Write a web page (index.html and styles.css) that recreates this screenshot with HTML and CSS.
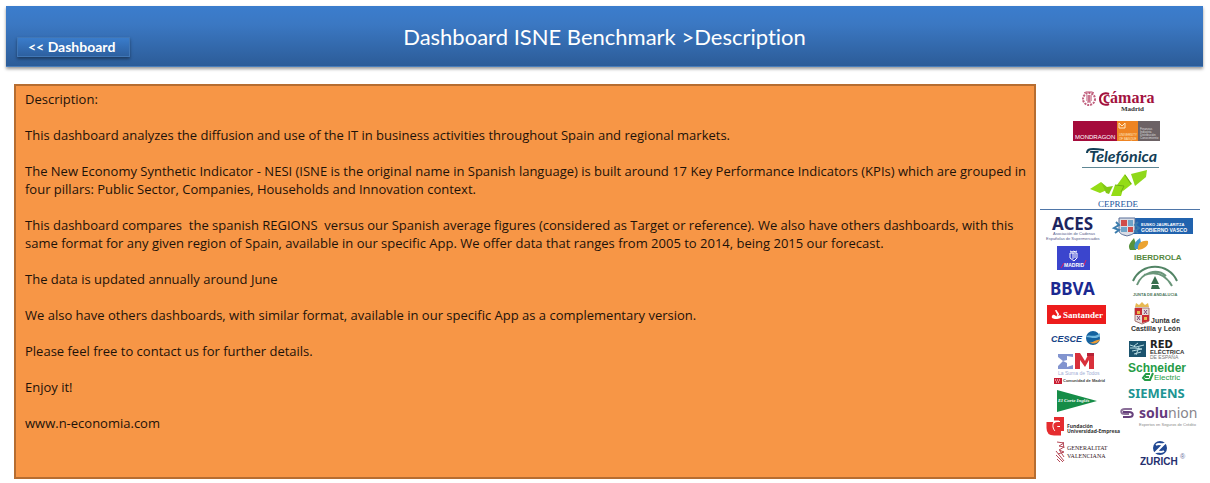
FILE: index.html
```html
<!DOCTYPE html>
<html lang="en">

<head>
    <meta charset="UTF-8">
    <meta name="viewport" content="width=device-width, initial-scale=1.0">
    <title>Dashboard ISNE Benchmark</title>
    <link rel="stylesheet" href="styles.css">
</head>

<body>
    <header class="top-bar">
        <a class="back-link" href="#">&lt;&lt; Dashboard</a>
        <h1 class="title">Dashboard ISNE Benchmark &gt;Description</h1>
    </header>

    <main class="main-container">
        <section class="description">
            <p>Description:</p>
            <p>This dashboard analyzes the diffusion and use of the IT in business activities throughout Spain and regional markets.</p>
            <p>The New Economy Synthetic Indicator - NESI (ISNE is the original name in Spanish language) is built around 17 Key Performance Indicators (KPIs) which are grouped in<br>
                four pillars: Public Sector, Companies, Households and Innovation context.</p>
            <p>This dashboard compares&nbsp; the spanish REGIONS&nbsp; versus our Spanish average figures (considered as Target or reference). We also have others dashboards, with this<br>
                same format for any given region of Spain, available in our specific App. We offer data that ranges from 2005 to 2014, being 2015 our forecast.</p>
            <p>The data is updated annually around June</p>
            <p>We also have others dashboards, with similar format, available in our specific App as a complementary version.</p>
            <p>Please feel free to contact us for further details.</p>
            <p>Enjoy it!</p>
            <p>www.n-economia.com</p>
        </section>

        <aside class="sponsors">
            <div class="partners">
                <!-- Camara Madrid -->
                <svg width="160" height="30" viewBox="0 0 160 30">
                    <circle cx="49" cy="11" r="6" fill="none" stroke="#c0607e" stroke-width="2" stroke-dasharray="2 1"/>
                    <path d="M46 8h6M46 10h6M46 12h6M47 14h4M49 7v7M44 5l2 -1h6l2 1" stroke="#b8486a" fill="none"/>
                    <path d="M69 6c-4-2-9 0-9 5s5 7 9 5" stroke="#a3123f" stroke-width="2" fill="none"/>
                    <text x="63" y="15" class="serif bold" font-size="16" fill="#a3123f">cámara</text>
                    <text x="81" y="23" class="serif bold" font-size="7" fill="#333">Madrid</text>
                </svg>
                <!-- Mondragon -->
                <svg width="160" height="26" viewBox="0 0 160 26">
                    <path d="M33 3h44v20H33z" fill="#a50b3b"/>
                    <path d="M77 3h21v20H77z" fill="#ee8422"/>
                    <path d="M98 3h22v20H98z" fill="#6c6265"/>
                    <text x="35" y="21" font-size="6" fill="#fff">MONDRAGON</text>
                    <path d="M79 5l3 3 3-3M79 5v5h6V5" stroke="#ffe9c5" fill="none"/>
                    <text x="79" y="18" font-size="3" fill="#ffe9c5">UNIVERSITY</text>
                    <text x="79" y="22" font-size="3" fill="#ffe9c5">OF BASQUE</text>
                    <g font-size="3" fill="#ddd">
                        <text x="100" y="12">Finanzas</text>
                        <text x="100" y="15">Industria</text>
                        <text x="100" y="18">Distribución</text>
                        <text x="100" y="21">Conocimiento</text>
                    </g>
                </svg>
                <!-- Telefonica -->
                <svg width="160" height="26" viewBox="0 0 160 26">
                    <path d="M47 9c0-4 3-5 17-3" stroke="#123e56" stroke-width="2" fill="none"/>
                    <text x="49" y="18" class="lato bold italic" font-size="16" fill="#123e56">Telefónica</text>
                    <path d="M42 23.5h77" stroke="#5f8794"/>
                </svg>
                <!-- Ceprede -->
                <svg width="160" height="38" viewBox="0 0 160 38">
                    <path d="M50 19l11-7 6 8-7 3z" fill="#94dc16"/>
                    <path d="M61 12l6 5 6-1-4 8-3-1z" fill="#83c815"/>
                    <path d="M71 26l4-11 9 1-3 10z" fill="#94dc16"/>
                    <path d="M77 15l8-11 7 10-9 7z" fill="#94dc16"/>
                    <path d="M91 4l16-4-1 7-11 9z" fill="#8fd81a"/>
                    <path d="M75 15l9 1-3 6M85 5l6 9" stroke="#6fb012" fill="none"/>
                    <text x="58" y="37" class="serif" font-size="9" fill="#23559c">CEPREDE</text>
                </svg>
            </div>

            <div class="members">
                <div class="column">
                    <!-- ACES -->
                    <svg width="72" height="28" viewBox="0 0 72 28">
                        <text x="12" y="14" class="noto bold" font-size="17" fill="#1d255f">ACES</text>
                        <text x="13" y="19" font-size="4" fill="#555d8c">Asociación de Cadenas</text>
                        <text x="6" y="24" font-size="4" fill="#555d8c">Españolas de Supermercados</text>
                    </svg>
                    <!-- Madrid -->
                    <svg width="72" height="32" viewBox="0 0 72 32">
                        <path d="M17 2h33v24H17z" fill="#3b45cd"/>
                        <path d="M30 9h7v5l-3 3-4-3zM30 7l2 1 2-1 1 1 2-1" stroke="#fff" fill="none"/>
                        <path d="M33 9v6M35 10v4" stroke="#fff"/>
                        <text x="24" y="23" class="bold" font-size="5" fill="#fff">MADRID</text>
                        <path d="M21 24l3-5M44 21l2-5" stroke="#e02062"/>
                    </svg>
                    <!-- BBVA -->
                    <svg width="72" height="26" viewBox="0 0 72 26">
                        <text x="10" y="19" class="noto bold" font-size="17" fill="#1b2991">BBVA</text>
                    </svg>
                    <!-- Santander -->
                    <svg width="72" height="26" viewBox="0 0 72 26">
                        <path d="M7 3h59v19H7z" fill="#ed1c1c"/>
                        <path d="M16 8c-1 2 3 4 1 6 4-1-1-5-1-6z" fill="#fff" stroke="#fff"/>
                        <path d="M12 14c1-2 2-1 4 0s4-2 5 0-2 3-5 3-5-1-4-3z" fill="#fff"/>
                        <text x="23" y="16" class="serif bold" font-size="9" fill="#fff">Santander</text>
                    </svg>
                    <!-- CESCE -->
                    <svg width="72" height="22" viewBox="0 0 72 22">
                        <text x="11" y="14" class="bold italic" font-size="9" fill="#174486">CESCE</text>
                        <circle cx="53" cy="10" r="7" fill="#14629f"/>
                        <path d="M46 9c3-4 8 2 14-4v3c-5 4-9 1-14 1z" fill="#72b8e0"/>
                        <path d="M49 14c4 2 6-3 11-2-2 3-6 5-11 2z" fill="#ee9b32"/>
                    </svg>
                    <!-- Comunidad de Madrid -->
                    <svg width="72" height="38" viewBox="0 0 72 38">
                        <path d="M18 4h15v3l-6-1v4l-4 1 4 2v4l6-2v4H18v-3l5-5-5-4z" fill="#8294cf"/>
                        <path d="M35 3h5l5 8 4-8h5v16h-5v-9l-4 7-5-7v9h-5z" fill="#d9303b"/>
                        <path d="M47 3h7v3h-7z" fill="#b72236"/>
                        <text x="18" y="25" font-size="5" fill="#a3afd6">La Suma de Todos</text>
                        <path d="M14 28h8v6h-8z" fill="#c91e32"/>
                        <path d="M15 30h6M16 32h4" stroke="#fff" stroke-dasharray="1 1"/>
                        <text x="23" y="32" class="bold" font-size="4" fill="#444">Comunidad de Madrid</text>
                    </svg>
                    <!-- El Corte Ingles -->
                    <svg width="72" height="26" viewBox="0 0 72 26">
                        <path d="M17 2l40 11-40 11z" fill="#168d48"/>
                        <text x="18" y="14" class="serif bold italic" font-size="5" fill="#fff">El Corte Inglés</text>
                    </svg>
                    <!-- Fundacion Universidad-Empresa -->
                    <svg width="72" height="24" viewBox="0 0 72 24">
                        <path d="M10 8v6c0 3 1 4 4 4h7" stroke="#e52c2f" stroke-width="7" fill="none"/>
                        <path d="M14 5h8v12M22 10h-4c-4 0-4 5 0 5h4" stroke="#e52c2f" stroke-width="4" fill="none"/>
                        <path d="M12 7h7M14 8c-2 3-1 7 1 9" stroke="#fff" fill="none"/>
                        <text x="27" y="14" class="noto bold" font-size="5" fill="#333">Fundación</text>
                        <text x="27" y="19" class="noto bold" font-size="5" fill="#333">Universidad-Empresa</text>
                    </svg>
                    <!-- Generalitat Valenciana -->
                    <svg width="72" height="28" viewBox="0 0 72 28">
                        <path d="M17 4l7 1-5 3 5 1-5 3 5 2-6 2M16 13l8 10M20 13l4 6M16 17l7 7M17 21l3 3M23 4l1 6" stroke="#b64a58" fill="none"/>
                        <text x="27" y="12" class="serif" font-size="6" fill="#37191f">GENERALITAT</text>
                        <text x="27" y="20" class="serif" font-size="6" fill="#37191f">VALENCIANA</text>
                    </svg>
                </div>

                <div class="column">
                    <!-- Gobierno Vasco -->
                    <svg width="88" height="22" viewBox="0 0 88 22">
                        <path d="M23 2h58v16H18z" fill="#2163ae"/>
                        <path d="M7 2h16v13c-1 4-6 4-8 5-2-1-7-1-8-5z" fill="#d9dde6" stroke="#596f98"/>
                        <path d="M9 4h6v6H9zM16 11h5v5h-5z" fill="#d14c48"/>
                        <path d="M16 4h5v6h-5zM9 11h6v5H9z" fill="#70a4c8"/>
                        <path d="M4 6l3 3-5 3 5 2-4 3M26 6l-3 3 4 3-4 3 3 2" stroke="#3d7dad" stroke-width="2" fill="none"/>
                        <text x="29" y="10" class="bold" font-size="4" fill="#fff">EUSKO JAURLARITZA</text>
                        <text x="29" y="16" class="bold" font-size="5" fill="#fff">GOBIERNO VASCO</text>
                    </svg>
                    <!-- Iberdrola -->
                    <svg width="88" height="26" viewBox="0 0 88 26">
                        <path d="M18 12c-3-5 1-8 4-12 1 4 4 8 2 12z" fill="#57933d"/>
                        <path d="M23 11c-2-5 1-8 5-11 1 4 2 9-1 11z" fill="#4297cc"/>
                        <path d="M26 12c-1-6 3-10 10-9 1 5-4 8-10 9z" fill="#eba331"/>
                        <text x="22" y="22" class="bold" font-size="8" fill="#54883d">IBERDROLA</text>
                    </svg>
                    <!-- Junta de Andalucia -->
                    <svg width="88" height="36" viewBox="0 0 88 36">
                        <path d="M21 17C29-2 57-2 65 17" stroke="#528465" stroke-width="2" fill="none"/>
                        <path d="M25 21c5-13 20-17 29-9M32 11c12-4 22 0 28 11" stroke="#6a967a" stroke-width="2" fill="none"/>
                        <path d="M43 12l4 8h-8zM40 21l-1 4h9l-2-4z" fill="#386f4e"/>
                        <text x="21" y="32" class="bold" font-size="4" fill="#4e7960">JUNTA DE ANDALUCIA</text>
                    </svg>
                    <!-- Junta de Castilla y Leon -->
                    <svg width="88" height="36" viewBox="0 0 88 36">
                        <path d="M23 7l1-4 3 2 3-3 3 3 3-2 1 4z" fill="#e7b953"/>
                        <path d="M23 8h14v13l-7 3-7-3z" fill="#e6dcda" stroke="#a77470"/>
                        <path d="M23 8h7v7h-7zM30 15h7v6l-7 2z" fill="#c92c32"/>
                        <path d="M25 11h3v3h-3zM32 17h3v3h-3z" fill="#e7b953"/>
                        <path d="M32 10l3 4M35 10l-3 4M25 16l3 4M28 16l-3 4" stroke="#804375"/>
                        <text x="39" y="23" class="bold" font-size="7" fill="#333">Junta de</text>
                        <text x="19" y="31" class="bold" font-size="7" fill="#333">Castilla y León</text>
                    </svg>
                    <!-- Red Electrica de Espana -->
                    <svg width="88" height="26" viewBox="0 0 88 26">
                        <path d="M17 5h17v16H17z" fill="#1c546e"/>
                        <path d="M18 9l6 2 8-2M18 12h5l7 1M20 15l10-2M22 18l7-2M26 7l-4 3M27 11l-3 8" stroke="#b9dce2" fill="none"/>
                        <text x="38" y="12" class="dejavu bold" font-size="10" fill="#222">RED</text>
                        <text x="38" y="18" class="bold" font-size="6" fill="#333">ELÉCTRICA</text>
                        <text x="38" y="23" font-size="5" fill="#777">DE ESPAÑA</text>
                    </svg>
                    <!-- Schneider Electric -->
                    <svg width="88" height="22" viewBox="0 0 88 22">
                        <text x="16" y="10" class="bold" font-size="12" fill="#269c46">Schneider</text>
                        <path d="M38 12h-4l-3 4 2 2h5l3-7M37 15h-4" stroke="#269c46" stroke-width="2" fill="none"/>
                        <text x="42" y="18" font-size="8" fill="#269c46">Electric</text>
                    </svg>
                    <!-- Siemens -->
                    <svg width="88" height="20" viewBox="0 0 88 20">
                        <text x="16" y="14" class="noto bold" font-size="13" fill="#209492">SIEMENS</text>
                    </svg>
                    <!-- Solunion -->
                    <svg width="88" height="30" viewBox="0 0 88 30">
                        <path d="M20 5h-7c-5 0-5 5 0 5h4" stroke="#8a6e98" stroke-width="2" fill="none"/>
                        <path d="M11 8h6c5 0 5 5 0 5h-6" stroke="#66407c" stroke-width="2" fill="none"/>
                        <text x="27" y="14" class="noto" font-size="14" fill="#88848b"><tspan class="bold" fill="#653b7d">solu</tspan>nion</text>
                        <text x="27" y="22" font-size="4" fill="#888">Expertos en Seguros de Crédito</text>
                    </svg>
                    <!-- Zurich -->
                    <svg width="88" height="36" viewBox="0 0 88 36">
                        <circle cx="48" cy="14" r="7" fill="#204792"/>
                        <path d="M44 11c3-2 4 0 8-1l-8 8c4-1 5 1 8-1" stroke="#fff" stroke-width="2" fill="none"/>
                        <text x="28" y="31" class="bold" font-size="10" fill="#252f6e">ZURICH</text>
                        <text x="68" y="25" font-size="7" fill="#666c9a">®</text>
                    </svg>
                </div>
            </div>
        </aside>
    </main>
</body>

</html>
```
FILE: styles.css
```css
* {
    padding: 0;
    margin: 0;
    box-sizing: border-box;
}

body {
    background-color: #ffffff;
    font-family: Lato, "Liberation Sans", sans-serif;
    font-size: 14px;
    font-variant-ligatures: none;
    padding: 6px 7px 0 6px;
}

.top-bar {
    display: grid;
    grid-template-columns: 1fr auto 1fr;
    height: 61px;
    padding: 0 11px;
    background: linear-gradient(#3b7dcd, #3b78c3 30%, #2c5c98);
    border-bottom: 1px solid #4a7ebb;
    box-shadow: 0 2px 3px rgba(0, 0, 0, 0.4);
}

.back-link {
    align-self: end;
    justify-self: start;
    width: 113px;
    height: 20px;
    margin-bottom: 9px;
    padding-left: 10px;
    background: linear-gradient(#3a7ccb, #2d60a0);
    border: 1px solid #4177b6;
    box-shadow: 0 2px 3px rgba(0, 0, 0, 0.4);
    color: #ffffff;
    font-weight: bold;
    line-height: 18px;
    text-decoration: none;
}

.title {
    align-self: center;
    color: #ffffff;
    font-size: 22px;
    font-weight: normal;
}

.main-container {
    display: flex;
    gap: 4px;
    padding: 17px 3px 0 8px;
}

.description {
    flex: 1;
    min-width: 0;
    padding: 4px 4px 45px 9px;
    background-color: #f79646;
    border: 2px solid #b66d31;
    color: #1d1209;
    font-family: "Open Sans", "Liberation Sans", sans-serif;
    font-size: 13px;
    line-height: 18px;
}

.description p {
    margin-bottom: 18px;
}

.description p:last-child {
    margin-bottom: 0;
}

.sponsors {
    width: 160px;
    padding-top: 4px;
}

.sponsors svg {
    display: block;
    overflow: visible;
    font-family: "Liberation Sans", sans-serif;
}

.partners {
    border-bottom: 1px solid #4f76a8;
    padding-bottom: 1px;
    margin-bottom: 6px;
}

.members {
    display: grid;
    grid-template-columns: 72px 88px;
}

.sponsors .serif {
    font-family: "Liberation Serif", serif;
}

.sponsors .lato {
    font-family: Lato, sans-serif;
}

.sponsors .noto {
    font-family: "Noto Sans", sans-serif;
}

.sponsors .dejavu {
    font-family: "DejaVu Sans", sans-serif;
}

.bold {
    font-weight: bold;
}

.italic {
    font-style: italic;
}
```
